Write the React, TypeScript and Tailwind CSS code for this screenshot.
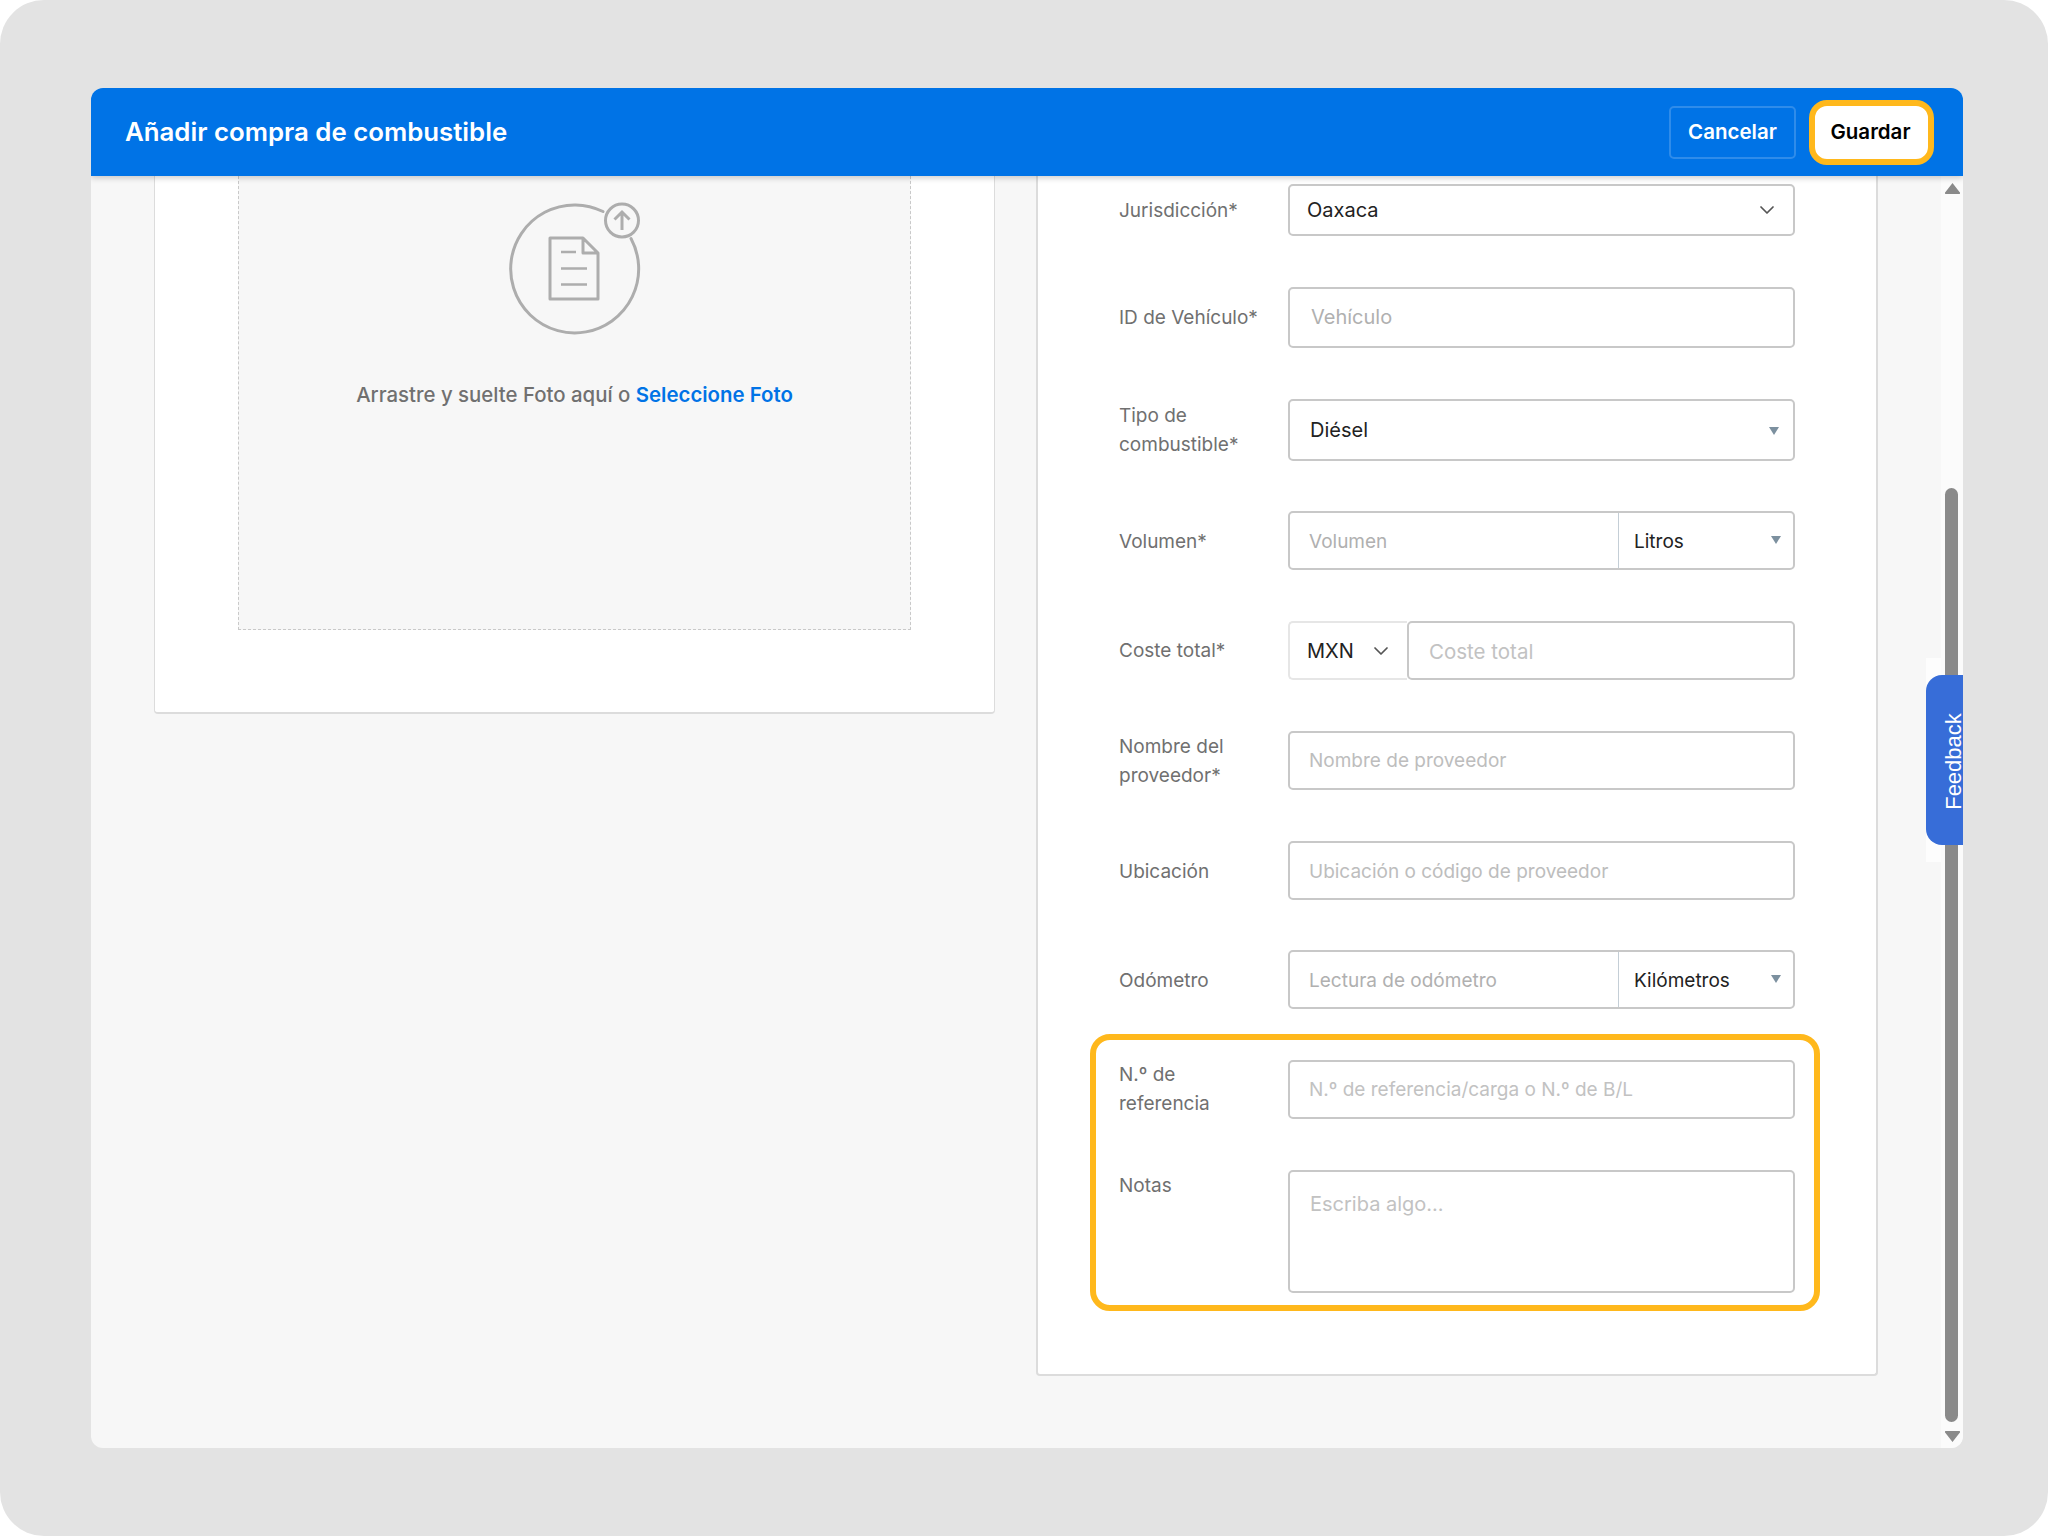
import { ChevronDown } from "lucide-react";

const font = { fontFamily: "Inter, 'Noto Sans', sans-serif" };

function Caret({ className }: { className: string }) {
  return (
    <svg viewBox="0 0 10 8" className={className}>
      <path d="M0 0h10L5 8z" fill="#7c909f" />
    </svg>
  );
}

function UploadIcon() {
  return (
    <svg viewBox="0 0 136 136" className="mr-[2px] h-[136px] w-[136px] overflow-visible" fill="none" stroke="#adadad">
      <path d="M97 11.5A64 64 0 1 0 125 38.5" strokeWidth="3" strokeLinecap="round" />
      <circle cx="116" cy="20.5" r="16.5" strokeWidth="3" />
      <path d="M116 30V12.5M108.5 19.5l7.5-7.5 7.5 7.5" strokeWidth="3" />
      <path d="M44 38h33l15 15v46H44zM77 38v15h15" strokeWidth="3" strokeLinejoin="round" />
      <path d="M55 52h15M55 68.5h26M55 84.5h26" strokeWidth="2.5" />
    </svg>
  );
}

function Field({ label, className = "", align = "items-center", children }: { label: React.ReactNode; className?: string; align?: string; children: React.ReactNode }) {
  return (
    <div className={`flex ${align} ${className}`}>
      <div className="w-[169px] shrink-0 text-[19px] leading-[29px] text-[#707070]">{label}</div>
      <div className="w-[507px]">{children}</div>
    </div>
  );
}

function TextBox({ placeholder, h = "h-[59px]", tone = "placeholder:text-[#bdbdbd]", size = "text-[19px]", pad = "pl-[19px]" }: { placeholder: string; h?: string; tone?: string; size?: string; pad?: string }) {
  return (
    <input
      placeholder={placeholder}
      className={`block ${h} w-full min-w-0 rounded-[5px] border-2 border-[#c8c8c8] bg-white ${pad} ${size} outline-none ${tone}`}
    />
  );
}

function UnitBox({ placeholder, unit }: { placeholder: string; unit: string }) {
  return (
    <div className="flex h-[59px] rounded-[5px] border-2 border-[#c8c8c8] bg-white">
      <input
        placeholder={placeholder}
        className="w-[329px] border-r border-[#c4ced6] pl-[19px] pt-[3px] text-[19px] outline-none placeholder:text-[#b0b0b0]"
      />
      <div className="relative flex flex-1 items-center pl-[15px] pt-[3px] text-[19px] text-[#222]">
        {unit}
        <Caret className="absolute right-[12px] top-[23px] h-[8px] w-[10px]" />
      </div>
    </div>
  );
}

export default function App() {
  return (
    <div className="h-[1536px] w-[2048px] overflow-hidden bg-white" style={font}>
      <div className="h-full rounded-[44px] bg-[#e3e3e3] pl-[91px] pt-[88px]">
        <div className="relative flex h-[1360px] w-[1872px] flex-col overflow-hidden rounded-[12px] bg-[#f7f7f7]">
          <header className="relative z-20 flex h-[88px] shrink-0 items-center justify-between bg-[#0073e6] pl-[34px] pr-[29px] shadow-[0_2px_6px_rgba(0,0,0,0.2)]">
            <h1 className="text-[25.8px] font-semibold text-white">Añadir compra de combustible</h1>
            <div className="flex items-center gap-[13px]">
              <button className="h-[53px] w-[127px] rounded-[5px] border-2 border-[#2f8cea] text-[20.5px] font-semibold text-white">Cancelar</button>
              <button className="h-[65px] w-[125px] rounded-[18px] border-[6px] border-[#ffb81c] bg-white pr-[2px] text-[20.5px] font-semibold text-black">Guardar</button>
            </div>
          </header>

          <div className="flex min-h-0 flex-1">
            <main className="flex flex-1 items-start gap-[41px] pl-[63px]">
              <section className="h-[538px] w-[841px] rounded-b-[4px] border-x border-b-2 border-[#dcdcdc] bg-white px-[83px]">
                <div className="flex h-[454px] flex-col items-center border-x border-b border-dashed border-[#c9c9c9] bg-[#f7f7f7] pt-[24px]">
                  <UploadIcon />
                  <p className="mt-[44px] text-[20.4px] font-medium leading-[30px] text-[#707070]">
                    Arrastre y suelte Foto aquí o <span className="font-semibold text-[#0073e6]">Seleccione Foto</span>
                  </p>
                </div>
              </section>

              <section className="relative flex h-[1200px] w-[842px] flex-col rounded-b-[4px] border-x-2 border-b-2 border-[#dcdcdc] bg-white pl-[81px] pt-[8px]">
                <Field label="Jurisdicción*">
                  <div className="flex h-[52px] items-center justify-between rounded-[5px] border-2 border-[#c8c8c8] pl-[17px] pr-[14px] text-[20px] text-[#222]">
                    Oaxaca
                    <ChevronDown className="h-[24px] w-[24px] text-[#555]" strokeWidth={1.75} />
                  </div>
                </Field>
                <Field label="ID de Vehículo*" className="mt-[51px]">
                  <TextBox placeholder="Vehículo" h="h-[61px]" size="text-[20px]" tone="placeholder:text-[#b0b0b0]" pad="pl-[21px] pb-[2px]" />
                </Field>
                <Field label={<>Tipo de<br />combustible*</>} className="mt-[51px]">
                  <div className="relative flex h-[62px] items-center rounded-[5px] border-2 border-[#c8c8c8] pl-[20px] text-[20px] text-[#222]">
                    Diésel
                    <Caret className="absolute right-[14px] top-[26px] h-[8px] w-[10px]" />
                  </div>
                </Field>
                <Field label={<span className="block pt-px">Volumen*</span>} className="mt-[50px]">
                  <UnitBox placeholder="Volumen" unit="Litros" />
                </Field>
                <Field label="Coste total*" className="mt-[51px]">
                  <div className="flex h-[59px]">
                    <div className="flex w-[119px] shrink-0 items-center justify-between rounded-l-[5px] border-2 border-r-0 border-[#e6e6e6] pl-[17px] pr-[14px] pt-[1px] text-[20px] text-[#222]">
                      MXN
                      <ChevronDown className="h-[24px] w-[24px] text-[#555]" strokeWidth={1.75} />
                    </div>
                    <TextBox placeholder="Coste total" size="text-[20.5px]" tone="placeholder:text-[#c2c2c2]" pad="pl-[20px] pt-[1px]" />
                  </div>
                </Field>
                <Field label={<>Nombre del<br />proveedor*</>} className="mt-[51px]">
                  <TextBox placeholder="Nombre de proveedor" />
                </Field>
                <Field label={<span className="block pt-px">Ubicación</span>} className="mt-[51px]">
                  <TextBox placeholder="Ubicación o código de proveedor" pad="pl-[19px] pt-[1px]" />
                </Field>
                <Field label={<span className="block pt-px">Odómetro</span>} className="mt-[50px]">
                  <UnitBox placeholder="Lectura de odómetro" unit="Kilómetros" />
                </Field>
                <Field label={<span className="block -mt-px">N.º de<br />referencia</span>} className="mt-[51px]">
                  <TextBox placeholder="N.º de referencia/carga o N.º de B/L" tone="placeholder:text-[#c2c2c2]" />
                </Field>
                <Field label={<span className="block pt-px">Notas</span>} className="mt-[51px]" align="items-start">
                  <textarea
                    placeholder="Escriba algo..."
                    className="block h-[123px] w-full resize-none rounded-[5px] border-2 border-[#c8c8c8] pl-[20px] pt-[20px] text-[20px] leading-[24px] outline-none placeholder:text-[#c2c2c2]"
                  />
                </Field>
                {/* highlight drawn over the last two fields */}
                <div className="pointer-events-none absolute left-[52px] top-[858px] h-[277px] w-[730px] rounded-[20px] border-[6px] border-[#ffb81c]" />
              </section>
            </main>

            <aside className="relative z-[5] flex w-[22px] shrink-0 flex-col items-start bg-[#fbfbfb] pl-[4px] pt-[7px]">
              <svg viewBox="0 0 15 11" className="h-[11px] w-[15px] shrink-0">
                <path d="M7.5 0l7 9a1 1 0 0 1-1 2h-12a1 1 0 0 1-1-2z" fill="#8a8a8a" />
              </svg>
              <div className="mt-[294px] h-[934px] w-[13px] shrink-0 rounded-full bg-[#8a8a8a]" />
              <svg viewBox="0 0 15 11" className="mt-[9px] h-[11px] w-[15px] shrink-0">
                <path d="M7.5 11l7-9a1 1 0 0 0-1-2h-12a1 1 0 0 0-1 2z" fill="#8a8a8a" />
              </svg>
            </aside>
          </div>

          {/* feedback tab, floats over the scrollbar */}
          <div className="absolute right-0 top-[570px] z-0 h-[204px] w-[37px] bg-white/70" />
          <div className="absolute right-0 top-[587px] z-10 flex h-[170px] w-[37px] items-center justify-center overflow-hidden rounded-l-[16px] bg-[#376dd8] pt-[3px]">
            <span
              className="ml-[17px] -rotate-90 whitespace-nowrap text-[22px] text-white"
              style={{ fontFamily: "'Liberation Sans', sans-serif" }}
            >
              Feedback
            </span>
          </div>
        </div>
      </div>
    </div>
  );
}
